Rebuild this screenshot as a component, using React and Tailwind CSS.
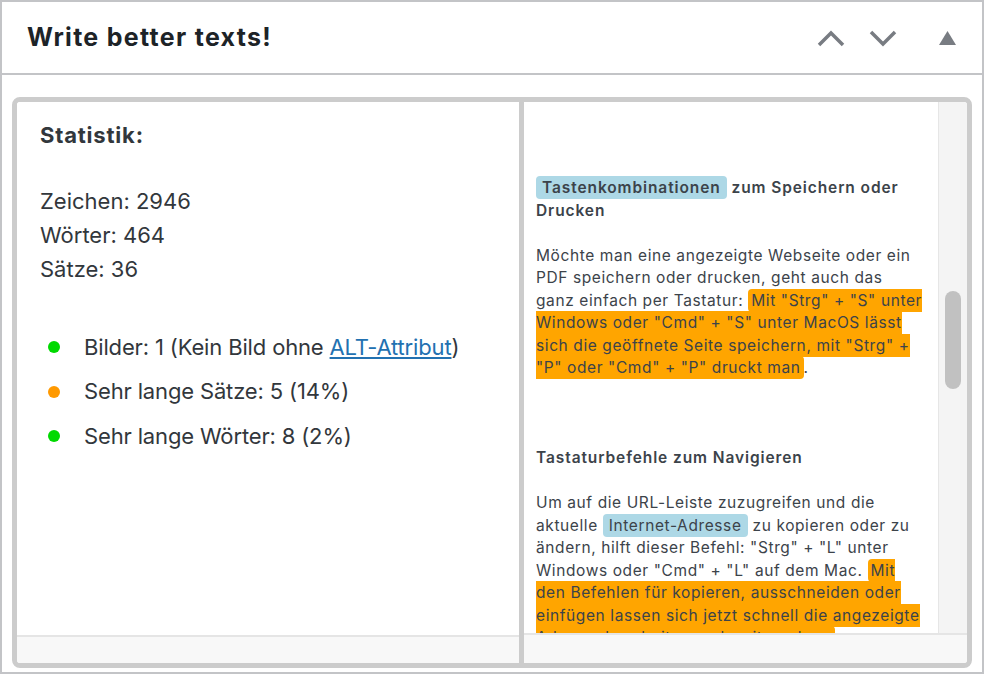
import React from 'react';

const font = { fontFamily: 'Inter, "Noto Sans", sans-serif' };

function ChevronUp() {
  return (
    <svg width="28" height="18" viewBox="0 0 28 18">
      <path d="M2 16 L14 4 L26 16" stroke="#787c82" strokeWidth="3.5" fill="none" />
    </svg>
  );
}

function ChevronDown() {
  return (
    <svg width="28" height="18" viewBox="0 0 28 18">
      <path d="M2 3 L14 15 L26 3" stroke="#787c82" strokeWidth="3.5" fill="none" />
    </svg>
  );
}

function Triangle() {
  return (
    <svg width="17" height="14" viewBox="0 0 17 14">
      <path d="M8.5 0 L17 14 L0 14 Z" fill="#787c82" />
    </svg>
  );
}

const Orange = ({ children }) => (
  <span className="bg-[#ffa500] rounded-[4px] px-[3px] py-[2px]">{children}</span>
);

const Blue = ({ children }) => (
  <span className="bg-[#add8e6] rounded-[4px] px-[6px] py-[2px]">{children}</span>
);

const stats = [
  { color: 'bg-[#00d900]', text: <>Bilder: 1 (Kein Bild ohne <a href="#" className="text-[#2271b1] underline">ALT-Attribut</a>)</> },
  { color: 'bg-[#ff9900]', text: 'Sehr lange Sätze: 5 (14%)' },
  { color: 'bg-[#00d900]', text: 'Sehr lange Wörter: 8 (2%)' },
];

export default function App() {
  return (
    <div style={font} className="w-[984px] h-[674px] bg-white border-2 border-[#c3c4c7] flex flex-col overflow-hidden">
      {/* Kopfzeile */}
      <div className="h-[73px] shrink-0 border-b-2 border-[#c3c4c7] flex items-center justify-between pl-[25px] pr-[26px]">
        <h2 className="text-[25px] font-bold text-[#1d2327] tracking-[1.3px]">Write better texts!</h2>
        <div className="flex items-center">
          <button className="mr-[24px]"><ChevronUp /></button>
          <button className="mr-[42px]"><ChevronDown /></button>
          <button><Triangle /></button>
        </div>
      </div>

      <div className="flex-1 min-h-0 pt-[22px] px-[10px] pb-[4px]">
        <div className="h-full border-[5px] border-[#cccccc] rounded-[8px] flex overflow-hidden">
          {/* Statistik */}
          <div className="w-[502px] shrink-0 flex flex-col min-h-0">
            <div className="flex-1 min-h-0 bg-white pl-[23px] pt-[19px] text-[#32373c]">
              <h3 className="text-[22px] font-bold leading-[28px] tracking-[0.8px]">Statistik:</h3>
              <div className="mt-[35px] text-[22px] leading-[34px]">
                <div>Zeichen: 2946</div>
                <div>Wörter: 464</div>
                <div>Sätze: 36</div>
              </div>
              <ul className="mt-[39px] text-[22px] tracking-[-0.15px]">
                {stats.map((s, i) => (
                  <li key={i} className="flex items-center h-[44.5px]">
                    <span className={`w-3 h-3 rounded-full ml-[8px] mr-[24px] ${s.color}`}></span>
                    <span>{s.text}</span>
                  </li>
                ))}
              </ul>
            </div>
            <div className="h-[28px] shrink-0 bg-[#f8f8f8] border-t-2 border-[#e5e5e5]"></div>
          </div>

          <div className="w-[5px] shrink-0 bg-[#cccccc]"></div>

          {/* Vorschau */}
          <div className="flex-1 flex flex-col min-h-0">
            <div className="flex-1 flex min-h-0 border-b-2 border-[#e5e5e5]">
              <div className="flex-1 bg-white overflow-hidden pl-[12px] pr-[14px] pt-[75px] text-[15.5px] leading-[22.5px] tracking-[0.6px] text-[#3c434a]">
                <h4 className="font-semibold tracking-[0.9px]">
                  <Blue>Tastenkombinationen</Blue> zum Speichern oder Drucken
                </h4>
                <p className="mt-[22.5px]">
                  Möchte man eine angezeigte Webseite oder ein PDF speichern oder drucken, geht auch das ganz einfach per Tastatur: <Orange>Mit "Strg" + "S" unter Windows oder "Cmd" + "S" unter MacOS lässt sich die geöffnete Seite speichern, mit "Strg" + "P" oder "Cmd" + "P" druckt man</Orange>.
                </p>
                <h4 className="font-semibold mt-[67.5px] tracking-[0.9px]">Tastaturbefehle zum Navigieren</h4>
                <p className="mt-[22.5px]">
                  Um auf die URL-Leiste zuzugreifen und die aktuelle <Blue>Internet-Adresse</Blue> zu kopieren oder zu ändern, hilft dieser Befehl: "Strg" + "L" unter Windows oder "Cmd" + "L" auf dem Mac. <Orange>Mit den Befehlen für kopieren, ausschneiden oder einfügen lassen sich jetzt schnell die angezeigte Adresse bearbeiten und weitergeben.</Orange>
                </p>
              </div>
              <div className="w-[29px] shrink-0 bg-[#f4f4f4] border-l border-[#e6e6e6] pt-[189px] flex justify-center">
                <div className="w-[16px] h-[98px] rounded-full bg-[#c1c1c1]"></div>
              </div>
            </div>
            <div className="h-[28px] shrink-0 bg-[#f8f8f8]"></div>
          </div>
        </div>
      </div>
    </div>
  );
}
